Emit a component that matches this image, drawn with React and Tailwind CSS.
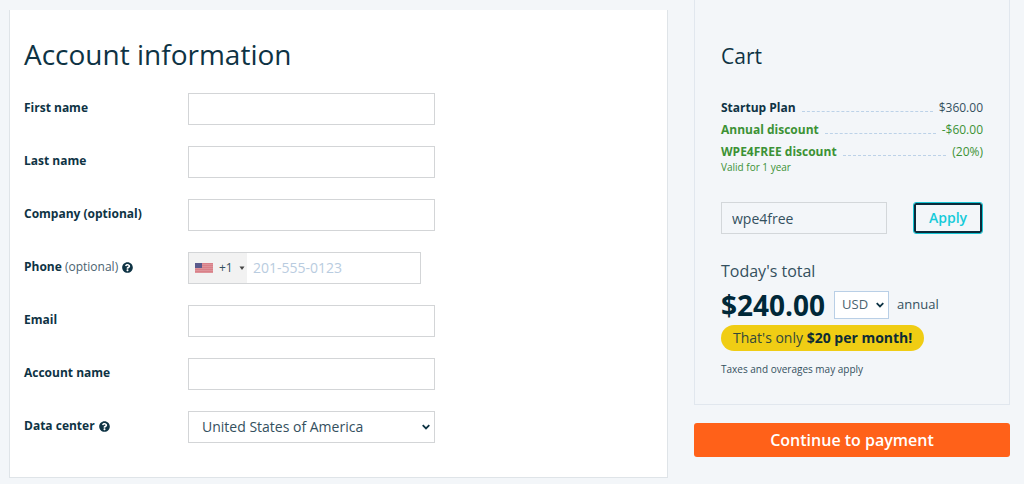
import { useState } from "react";
import { FaQuestionCircle } from "react-icons/fa";

const fieldClass =
  "h-8 w-full border border-[#d3d5d7] bg-white px-2.5 text-sm text-[#34505e] outline-none";

const cartLines = [
  { name: "Startup Plan", price: "$360.00" },
  { name: "Annual discount", price: "-$60.00", discount: true },
  {
    name: "WPE4FREE discount",
    price: "(20%)",
    discount: true,
    note: "Valid for 1 year",
  },
];

function UsFlag() {
  return (
    <svg viewBox="0 0 18 10" className="h-2.5 w-[18px]" aria-hidden="true">
      <rect width="18" height="10" fill="#d98088" />
      <path
        d="M0 1.5h18M0 3.5h18M0 5.5h18M0 7.5h18M0 9.5h18"
        stroke="#e0a0a6"
        strokeWidth="0.6"
      />
      <rect width="7" height="5" fill="#5a5a8c" />
    </svg>
  );
}

function Chevron() {
  return (
    <svg
      viewBox="0 0 8 6"
      className="pointer-events-none absolute top-1/2 right-[5px] h-1.5 w-2 -translate-y-1/2"
      aria-hidden="true"
    >
      <path d="M0.7 1.2 4 4.4 7.3 1.2" fill="none" stroke="#0e3344" strokeWidth="1.8" />
    </svg>
  );
}

function FormRow({ id, label, optional, help, children }) {
  return (
    <div className="flex items-center">
      <div className="flex w-[164px] shrink-0 items-center gap-1 pb-0.5 text-xs">
        <label htmlFor={id} className="font-bold">
          {label}
          {optional && (
            <span className="font-normal text-[#4a6370]"> (optional)</span>
          )}
        </label>
        {help && (
          <button type="button" aria-label={help}>
            <FaQuestionCircle className="size-[11px]" />
          </button>
        )}
      </div>
      <div className="w-[247px]">{children}</div>
    </div>
  );
}

function TextRow({ id, label, type = "text" }) {
  return (
    <FormRow id={id} label={label}>
      <input id={id} type={type} className={fieldClass} />
    </FormRow>
  );
}

function AccountForm() {
  const [country, setCountry] = useState("us");

  return (
    <form className="mt-2.5 min-w-0 flex-1 border border-t-0 border-[#dfe4e8] bg-white px-3.5 pt-6 pb-[34px]">
      <h1 className="text-[28px] leading-10">Account information</h1>

      <div className="mt-[19px] flex flex-col gap-[21px]">
        <TextRow id="first-name" label="First name" />
        <TextRow id="last-name" label="Last name" />
        <TextRow id="company" label="Company (optional)" />

        <FormRow id="phone" label="Phone" optional help="About phone">
          <div className="flex h-8 w-[233px] border border-[#d3d5d7]">
            <button
              type="button"
              className="flex w-[58px] shrink-0 items-center bg-[#f2f2f2] pl-1.5 text-xs text-[#34505e]"
            >
              <UsFlag />
              <span className="ml-1.5">+1</span>
              <svg
                viewBox="0 0 6 4"
                className="ml-1.5 h-1 w-1.5"
                aria-hidden="true"
              >
                <path d="M0.5 0.5h5L3 4z" fill="#444" />
              </svg>
            </button>
            <input
              id="phone"
              type="tel"
              placeholder="201-555-0123"
              className="min-w-0 flex-1 px-1.5 text-sm outline-none placeholder:text-[#b9cce0]"
            />
          </div>
        </FormRow>

        <TextRow id="email" label="Email" type="email" />
        <TextRow id="account-name" label="Account name" />

        <FormRow id="data-center" label="Data center" help="About data centers">
          <div className="relative">
            <select
              id="data-center"
              value={country}
              onChange={(e) => setCountry(e.target.value)}
              className="h-8 w-full appearance-none border border-[#d3d5d7] bg-white pl-[13px] text-sm text-[#34505e]"
            >
              <option value="us">United States of America</option>
              <option value="uk">United Kingdom</option>
              <option value="de">Germany</option>
            </select>
            <Chevron />
          </div>
        </FormRow>
      </div>
    </form>
  );
}

function CartLine({ name, price, discount, note }) {
  return (
    <li className={discount ? "text-[#3c9235]" : ""}>
      <div className="flex items-baseline text-xs leading-[22px]">
        <span className="font-bold">{name}</span>
        <span className="mx-1.5 flex-1 border-b border-dashed border-[#bcd2e8]" />
        <span className={discount ? "" : "text-[#34505e]"}>{price}</span>
      </div>
      {note && <p className="-mt-0.5 text-[10px] leading-3">{note}</p>}
    </li>
  );
}

function Cart() {
  const [coupon, setCoupon] = useState("wpe4free");
  const [currency, setCurrency] = useState("USD");

  return (
    <aside className="w-[316px] shrink-0">
      <section className="border border-t-0 border-[#e1e7ee] px-[26px] pt-10 pb-7">
        <h2 className="text-[21px] leading-8">Cart</h2>

        <ul className="mt-[25px]">
          {cartLines.map((line) => (
            <CartLine key={line.name} {...line} />
          ))}
        </ul>

        <div className="mt-[29px] flex items-center justify-between">
          <input
            aria-label="Coupon code"
            value={coupon}
            onChange={(e) => setCoupon(e.target.value)}
            className="h-8 w-[166px] border border-[#d3d7da] bg-transparent px-2.5 text-sm text-[#34505e] outline-none"
          />
          <button
            type="button"
            className="h-8 w-[70px] rounded-[3px] border border-[#16c4d3] text-sm font-semibold text-[#16cbd9] inset-ring-2 inset-ring-[#0b2b3b]"
          >
            Apply
          </button>
        </div>

        <p className="mt-[25px] text-base leading-6 text-[#34505e]">
          Today's total
        </p>
        <div className="mt-0.5 flex items-center">
          <span className="text-[28px] leading-10 font-bold text-[#002838]">
            $240.00
          </span>
          <div className="relative ml-[9px]">
            <select
              aria-label="Currency"
              value={currency}
              onChange={(e) => setCurrency(e.target.value)}
              className="block h-7 w-[55px] appearance-none border border-[#b9cfe6] bg-white pl-[7px] text-[13px] text-[#4a6370]"
            >
              <option>USD</option>
              <option>EUR</option>
              <option>GBP</option>
            </select>
            <Chevron />
          </div>
          <span className="ml-2 text-[13px] text-[#34505e]">annual</span>
        </div>
        <p className="w-fit rounded-full bg-[#f0cd14] px-3 text-sm leading-[26px] text-[#33483a]">
          That's only{" "}
          <strong className="text-[#0d2b35]">$20 per month!</strong>
        </p>
        <p className="mt-[11px] text-[10px] leading-3.5 text-[#34505e]">
          Taxes and overages may apply
        </p>
      </section>

      <button
        type="button"
        className="mt-[18px] h-[34px] w-full rounded-[3px] bg-[#ff6119] text-base font-semibold text-white"
      >
        Continue to payment
      </button>
    </aside>
  );
}

export default function App() {
  return (
    <main className="flex min-h-screen items-start gap-[26px] bg-[#f3f6f9] pr-3.5 pl-[9px] font-['Open_Sans','Noto_Sans',sans-serif] text-[#0e3344]">
      <AccountForm />
      <Cart />
    </main>
  );
}
